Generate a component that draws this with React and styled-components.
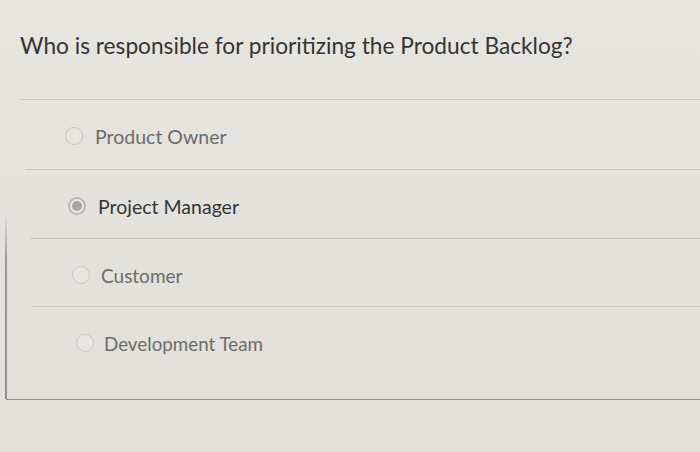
import React from 'react';
import styled, { createGlobalStyle } from 'styled-components';

const Global = createGlobalStyle`
  html, body {
    margin: 0;
    padding: 0;
    background: #e4e2dd;
  }
  body {
    font-family: Lato, "Open Sans", "Liberation Sans", sans-serif;
    width: 700px;
    height: 452px;
    overflow: hidden;
  }
`;

const Page = styled.div`
  display: flex;
  flex-direction: column;
  background: linear-gradient(180deg, #e7e5e0 0%, #e3e1dc 60%, #e1dfda 100%);
  height: 452px;
`;

const Card = styled.div`
  position: relative;
  margin-left: 6px;
  display: flex;
  flex-direction: column;
  border-bottom: 1.5px solid #8f8d89;

  &::before {
    content: '';
    position: absolute;
    left: -1px;
    top: 214px;
    bottom: 0;
    width: 1.5px;
    background: linear-gradient(180deg, rgba(150,148,144,0) 0%, #9a9894 25%, #8f8d89 100%);
  }
`;

const QuestionRow = styled.div`
  height: 100px;
  margin-left: 14px;
  border-bottom: 1px solid #cac8c3;
  box-sizing: border-box;
  padding-top: 32px;
`;

const Question = styled.h1`
  margin: 0;
  font-family: Lato, "Open Sans", sans-serif;
  font-weight: 400;
  font-size: 22.7px;
  line-height: 28px;
  color: #343434;
`;

const Row = styled.label`
  display: flex;
  align-items: flex-start;
  gap: ${p => p.$gap}px;
  box-sizing: border-box;
  height: ${p => p.$h}px;
  margin-left: ${p => p.$line}px;
  padding-left: ${p => p.$radio}px;
  padding-top: 26px;
  border-bottom: ${p => (p.$last ? 'none' : '1px solid #c8c6c1')};
`;

const Radio = styled.span`
  flex: none;
  margin-top: 1px;
  width: 18px;
  height: 18px;
  border-radius: 50%;
  box-sizing: border-box;
  border: ${p => (p.$on ? '2px solid #bab8b4' : '1.5px solid #c8c6c1')};
  background: ${p => (p.$on ? '#ebe9e5' : '#e7e5e0')};
  display: flex;
  align-items: center;
  justify-content: center;

  &::after {
    content: '';
    display: ${p => (p.$on ? 'block' : 'none')};
    width: 10px;
    height: 10px;
    border-radius: 50%;
    background: #a7a5a1;
  }
`;

const OptionText = styled.span`
  font-family: Lato, "Open Sans", sans-serif;
  font-size: ${p => p.$size}px;
  line-height: 21px;
  color: ${p => (p.$on ? '#353535' : '#6d6c6a')};
`;

const options = [
  { label: 'Product Owner', h: 70, line: 19, radio: 40, gap: 12, size: 19.5 },
  { label: 'Project Manager', h: 69, line: 24, radio: 38, gap: 12, size: 19.5, on: true },
  { label: 'Customer', h: 68, line: 26, radio: 40, gap: 11, size: 19 },
  { label: 'Development Team', h: 92, line: 26, radio: 44, gap: 10, size: 18.8, last: true },
];

export default function App() {
  return (
    <Page>
      <Global />
      <Card>
        <QuestionRow>
          <Question>Who is responsible for prioritizing the Product Backlog?</Question>
        </QuestionRow>
        {options.map(o => (
          <Row
            key={o.label}
            $h={o.h}
            $line={o.line}
            $radio={o.radio}
            $gap={o.gap}
            $last={o.last}
          >
            <Radio $on={o.on} />
            <OptionText $on={o.on} $size={o.size}>{o.label}</OptionText>
          </Row>
        ))}
      </Card>
    </Page>
  );
}
